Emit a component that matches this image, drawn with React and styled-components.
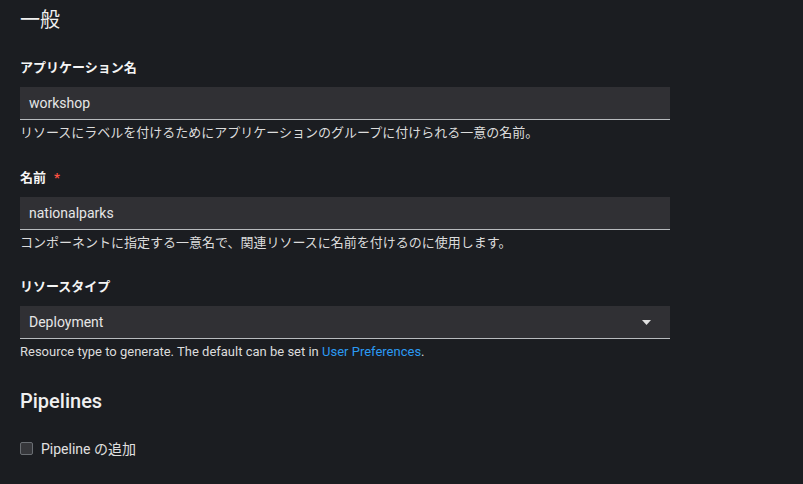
import React from 'react';
import styled, { createGlobalStyle } from 'styled-components';

const GlobalStyle = createGlobalStyle`
	html, body {
		margin: 0;
		padding: 0;
		background: #1b1d21;
	}
	body {
		font-family: 'Roboto', 'Noto Sans CJK JP', sans-serif;
		color: #e0e0e0;
	}
`;

const Page = styled.div`
	width: 803px;
	height: 484px;
	box-sizing: border-box;
	padding: 7px 20px 0;
	overflow: hidden;
	background: #1b1d21;
`;

const SectionTitle = styled.h2`
	margin: ${(p) => p.$top || 0}px 0 0;
	font-size: 20px;
	line-height: 26px;
	font-weight: ${(p) => (p.$latin ? 500 : 400)};
	color: #f0f0f0;
`;

const Field = styled.div`
	display: flex;
	flex-direction: column;
	width: 650px;
	margin-top: ${(p) => p.$top}px;
`;

const Label = styled.label`
	font-size: 13px;
	line-height: 20px;
	font-weight: 700;
	color: #f5f5f5;
	display: flex;
	align-items: center;
	gap: 8px;
`;

const Required = styled.span`
	color: #fe5142;
	font-size: 13px;
	font-weight: 700;
`;

const TextBox = styled.div`
	margin-top: 9px;
	height: 33px;
	box-sizing: border-box;
	padding: 0 9px;
	display: flex;
	align-items: center;
	justify-content: space-between;
	background: #303034;
	border-bottom: 1px solid #b8bbbe;
	font-size: 14px;
	color: #e6e6e6;
`;

const Caret = styled.svg`
	width: 9px;
	height: 5px;
	margin-right: 10px;
	fill: #e0e0e0;
`;

const Helper = styled.div`
	margin-top: 4px;
	font-size: 13px;
	line-height: 18px;
	color: #dcdcdc;
	white-space: nowrap;
`;

const Link = styled.a`
	color: #2b9af3;
	text-decoration: none;
`;

const CheckRow = styled.label`
	margin-top: 24px;
	display: flex;
	align-items: center;
	gap: 8px;
	height: 20px;
	font-size: 14px;
	color: #e0e0e0;
`;

const CheckBox = styled.span`
	width: 13px;
	height: 13px;
	box-sizing: border-box;
	border: 1px solid #6a6e73;
	border-radius: 2px;
	background: #36373b;
`;

const App = () => {
	return (
		<Page>
			<GlobalStyle />
			<SectionTitle>一般</SectionTitle>
			<Field $top={25}>
				<Label>アプリケーション名</Label>
				<TextBox>workshop</TextBox>
				<Helper>
					リソースにラベルを付けるためにアプリケーションのグループに付けられる一意の名前。
				</Helper>
			</Field>
			<Field $top={26}>
				<Label>
					名前 <Required>*</Required>
				</Label>
				<TextBox>nationalparks</TextBox>
				<Helper>コンポーネントに指定する一意名で、関連リソースに名前を付けるのに使用します。</Helper>
			</Field>
			<Field $top={25}>
				<Label>リソースタイプ</Label>
				<TextBox>
					Deployment
					<Caret viewBox='0 0 9 5'>
						<path d='M0 0 H9 L4.5 5 Z' />
					</Caret>
				</TextBox>
				<Helper>
					Resource type to generate. The default can be set in <Link href='#'>User Preferences</Link>.
				</Helper>
			</Field>
			<SectionTitle $top={27} $latin>
				Pipelines
			</SectionTitle>
			<CheckRow>
				<CheckBox />
				Pipeline の追加
			</CheckRow>
		</Page>
	);
};

export default App;
